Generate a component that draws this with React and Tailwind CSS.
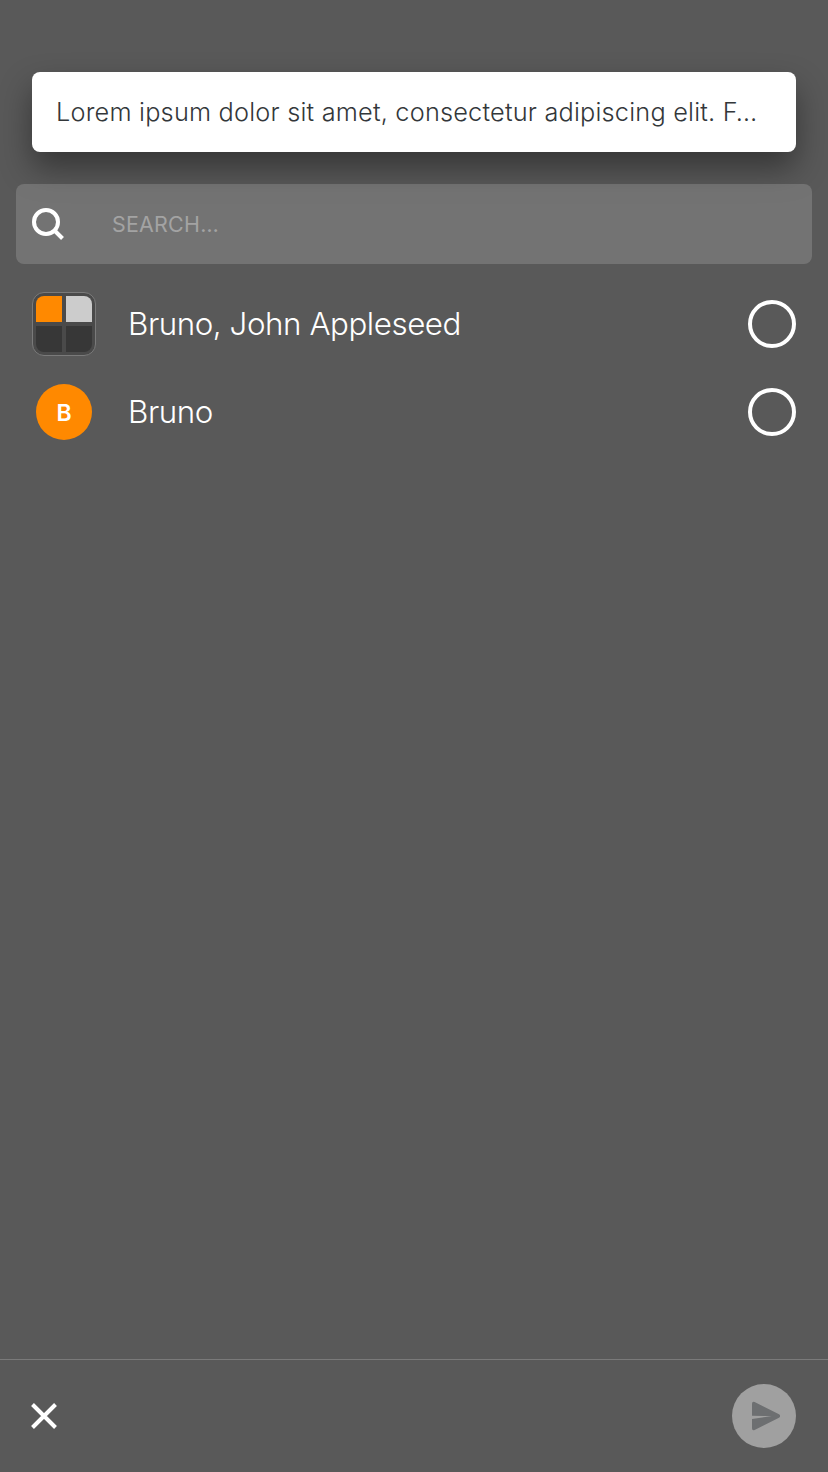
import React from "react";

function SelectCircle() {
  return <button aria-label="Select" className="size-12 shrink-0 rounded-full border-4 border-white" />;
}

function Row({ avatar, name }) {
  return (
    <li className="flex h-[88px] items-center px-8">
      <div className="flex w-24 shrink-0 items-center">{avatar}</div>
      <span className="flex-1 text-[31.3px] leading-10 font-light tracking-[-0.43px] whitespace-nowrap">
        {name}
      </span>
      <SelectCircle />
    </li>
  );
}

export default function App() {
  return (
    <main className="flex h-[1472px] w-[828px] flex-col bg-[#595959] font-['Inter',sans-serif] text-white">
      <section className="mx-8 mt-[72px] flex h-20 shrink-0 items-center rounded-lg bg-white px-6 text-[#33373a] shadow-[0_16px_32px_rgba(0,0,0,0.4)]">
        <p className="text-[25.3px] leading-8 font-light tracking-[0.21px] whitespace-nowrap">
          Lorem ipsum dolor sit amet, consectetur adipiscing elit. F…
        </p>
      </section>
      <label className="relative mx-4 mt-8 flex h-20 shrink-0 items-center rounded-lg bg-white/16 pl-4">
        <svg className="size-8" viewBox="0 0 32 32" fill="none" stroke="currentColor" strokeWidth="4">
          <circle cx="14" cy="14" r="12" />
          <path d="M22 22l8.500 8.500" />
        </svg>
        <span className="ml-12 text-[21.4px] tracking-[0.25px] text-[#a3a3a3]">SEARCH…</span>
      </label>
      <ul className="mt-4 flex-1">
        <Row
          name="Bruno, John Appleseed"
          avatar={
            <div className="grid size-16 grid-cols-2 gap-1 rounded-xl border border-[#7a7a7a] bg-[#4a4a4a] p-[3px]">
              <i className="rounded-tl-lg bg-[#ff8900]" />
              <i className="rounded-tr-lg bg-[#cccccc]" />
              <i className="rounded-bl-lg bg-[#373737]" />
              <i className="rounded-br-lg bg-[#373737]" />
            </div>
          }
        />
        <Row
          name="Bruno"
          avatar={
            <div className="ml-1 flex size-14 items-center justify-center rounded-full bg-[#ff8900] pt-0.5 text-[23px] font-semibold">
              B
            </div>
          }
        />
      </ul>
      <footer className="flex h-[113px] shrink-0 items-center justify-between border-t border-[#7a7a7a] pr-8 pl-[31px]">
        <svg
          className="size-[26px]"
          viewBox="0 0 26 26"
          fill="none"
          stroke="currentColor"
          strokeWidth="4"
        >
          <path d="M1.500 1.500l23 23M24.500 1.500l-23 23" />
        </svg>
        <button
          aria-label="Send"
          className="flex size-16 items-center justify-center rounded-full bg-[#a0a0a0] text-[#6d6f71]"
        >
          <svg className="size-8" viewBox="0 0 32 32" fill="currentColor">
            <path d="M4 3.800V15.800L23.700 16L4 19V28.200Q4 31 6.600 30.100L31 17.700Q33.500 16 31 14.300L6.600 1.900Q4 1 4 3.800Z" />
          </svg>
        </button>
      </footer>
    </main>
  );
}
